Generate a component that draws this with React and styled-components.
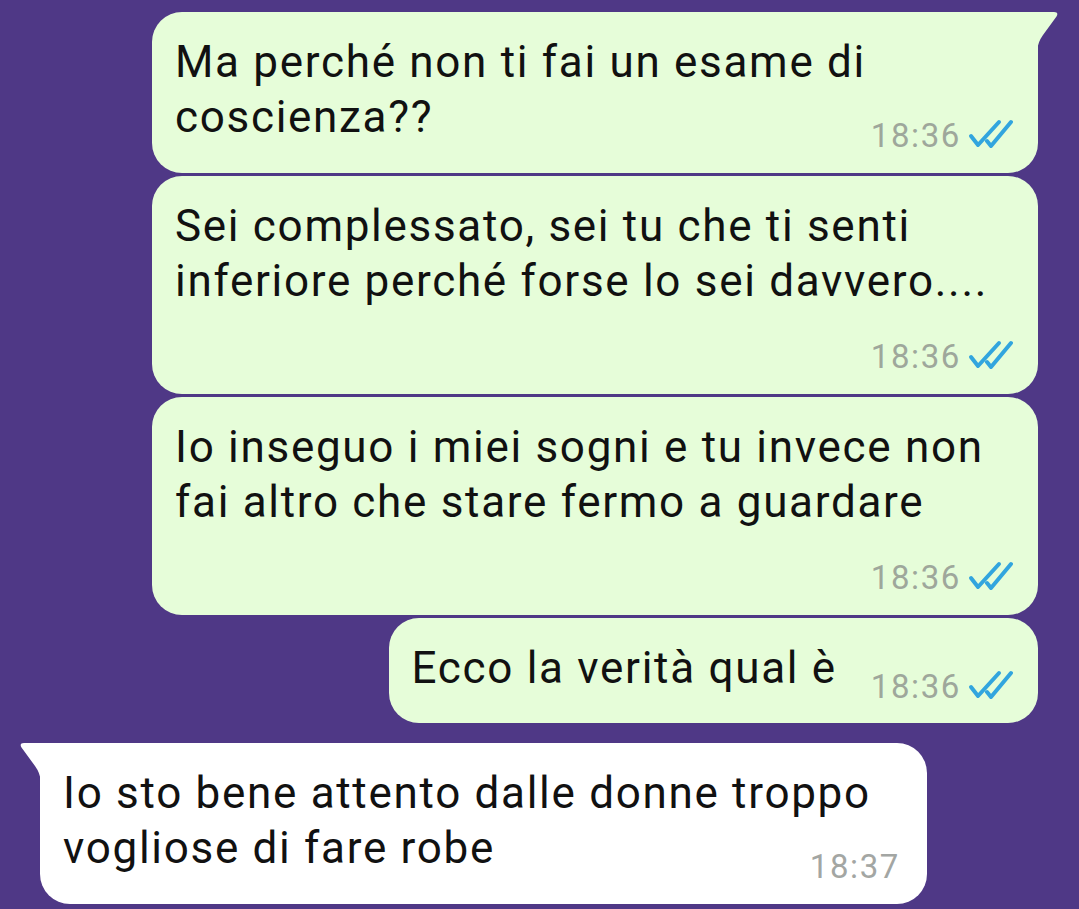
import React from "react";
import styled, { createGlobalStyle } from "styled-components";

const Global = createGlobalStyle`
  html, body { margin: 0; padding: 0; background: #4f3886; }
  body { font-family: Roboto, "Noto Sans", sans-serif; }
`;

const Chat = styled.div`
  display: flex;
  flex-direction: column;
  padding: 12px 41px 0 40px;
  min-height: 909px;
  box-sizing: border-box;
  background: #4f3886;
`;

const Group = styled.div`
  display: flex;
  flex-direction: column;
  align-items: ${(p) => (p.$out ? "flex-end" : "flex-start")};
  gap: 3px;
  margin-bottom: ${(p) => p.$after || 0}px;
`;

const Bubble = styled.div`
  position: relative;
  box-sizing: border-box;
  max-width: ${(p) => (p.$out ? 886 : 887)}px;
  background: ${(p) => (p.$out ? "#e6fdd9" : "#ffffff")};
  border-radius: 30px;
  ${(p) => p.$first && (p.$out ? "border-top-right-radius: 0;" : "border-top-left-radius: 0;")}
  padding: 23px ${(p) => (p.$out ? 25 : 27)}px ${(p) => (p.$inline ? 27 : 19)}px 23px;
  display: ${(p) => (p.$inline ? "flex" : "block")};
  align-items: flex-end;
  gap: 34px;
`;

const Text = styled.div`
  font-size: 44px;
  line-height: 55px;
  letter-spacing: 1.7px;
  color: #111111;
`;

const Meta = styled.div`
  display: flex;
  justify-content: flex-end;
  align-items: center;
  gap: 6px;
  height: 36px;
  margin-top: ${(p) => (p.$inline ? 0 : p.$gap)}px;
  margin-bottom: ${(p) => (p.$inline ? -9 : 0)}px;
  flex-shrink: 0;
`;

const Time = styled.span`
  font-size: 33px;
  line-height: 36px;
  letter-spacing: 1.6px;
  color: ${(p) => (p.$out ? "#9ea79b" : "#a3a6a3")};
`;

const Tail = styled.svg`
  position: absolute;
  top: 0;
  width: 22px;
  height: 40px;
  ${(p) => (p.$out ? "right: -21px;" : "left: -21px; transform: scaleX(-1);")}
`;

const Ticks = () => (
  <svg width="46" height="30" viewBox="0 0 46 30" style={{ marginTop: -4 }}>
    <path d="M4 17 L11 26 L32 3" fill="none" stroke="#32a5de" strokeWidth="4" strokeLinecap="round" strokeLinejoin="round" />
    <path d="M20 22 L24 27 L44 3" fill="none" stroke="#32a5de" strokeWidth="4" strokeLinecap="round" strokeLinejoin="round" />
  </svg>
);

const TailShape = ({ out }) => (
  <Tail $out={out} viewBox="0 0 22 40">
    <path d="M-1 0 H17 Q22 0 19.5 4.5 L6 23 Q1 30 0.5 37 L-1 40 Z" fill={out ? "#e6fdd9" : "#ffffff"} />
  </Tail>
);

const Message = ({ out, first, inline, gap, time, children }) => (
  <Bubble $out={out} $first={first} $inline={inline}>
    {first && <TailShape out={out} />}
    <Text>{children}</Text>
    <Meta $inline={inline} $gap={gap}>
      <Time $out={out}>{time}</Time>
      {out && <Ticks />}
    </Meta>
  </Bubble>
);

export default function App() {
  return (
    <>
      <Global />
      <Chat>
        <Group $out $after={20}>
          <Message out first gap={-27} time="18:36">
            Ma perché non ti fai un esame di coscienza??
          </Message>
          <Message out gap={30} time="18:36">
            Sei complessato, sei tu che ti senti inferiore perché forse lo sei davvero....
          </Message>
          <Message out gap={30} time="18:36">
            Io inseguo i miei sogni e tu invece non fai altro che stare fermo a guardare
          </Message>
          <Message out inline time="18:36">
            Ecco la verità qual è
          </Message>
        </Group>
        <Group>
          <Message first gap={-27} time="18:37">
            Io sto bene attento dalle donne troppo vogliose di fare robe
          </Message>
        </Group>
      </Chat>
    </>
  );
}
